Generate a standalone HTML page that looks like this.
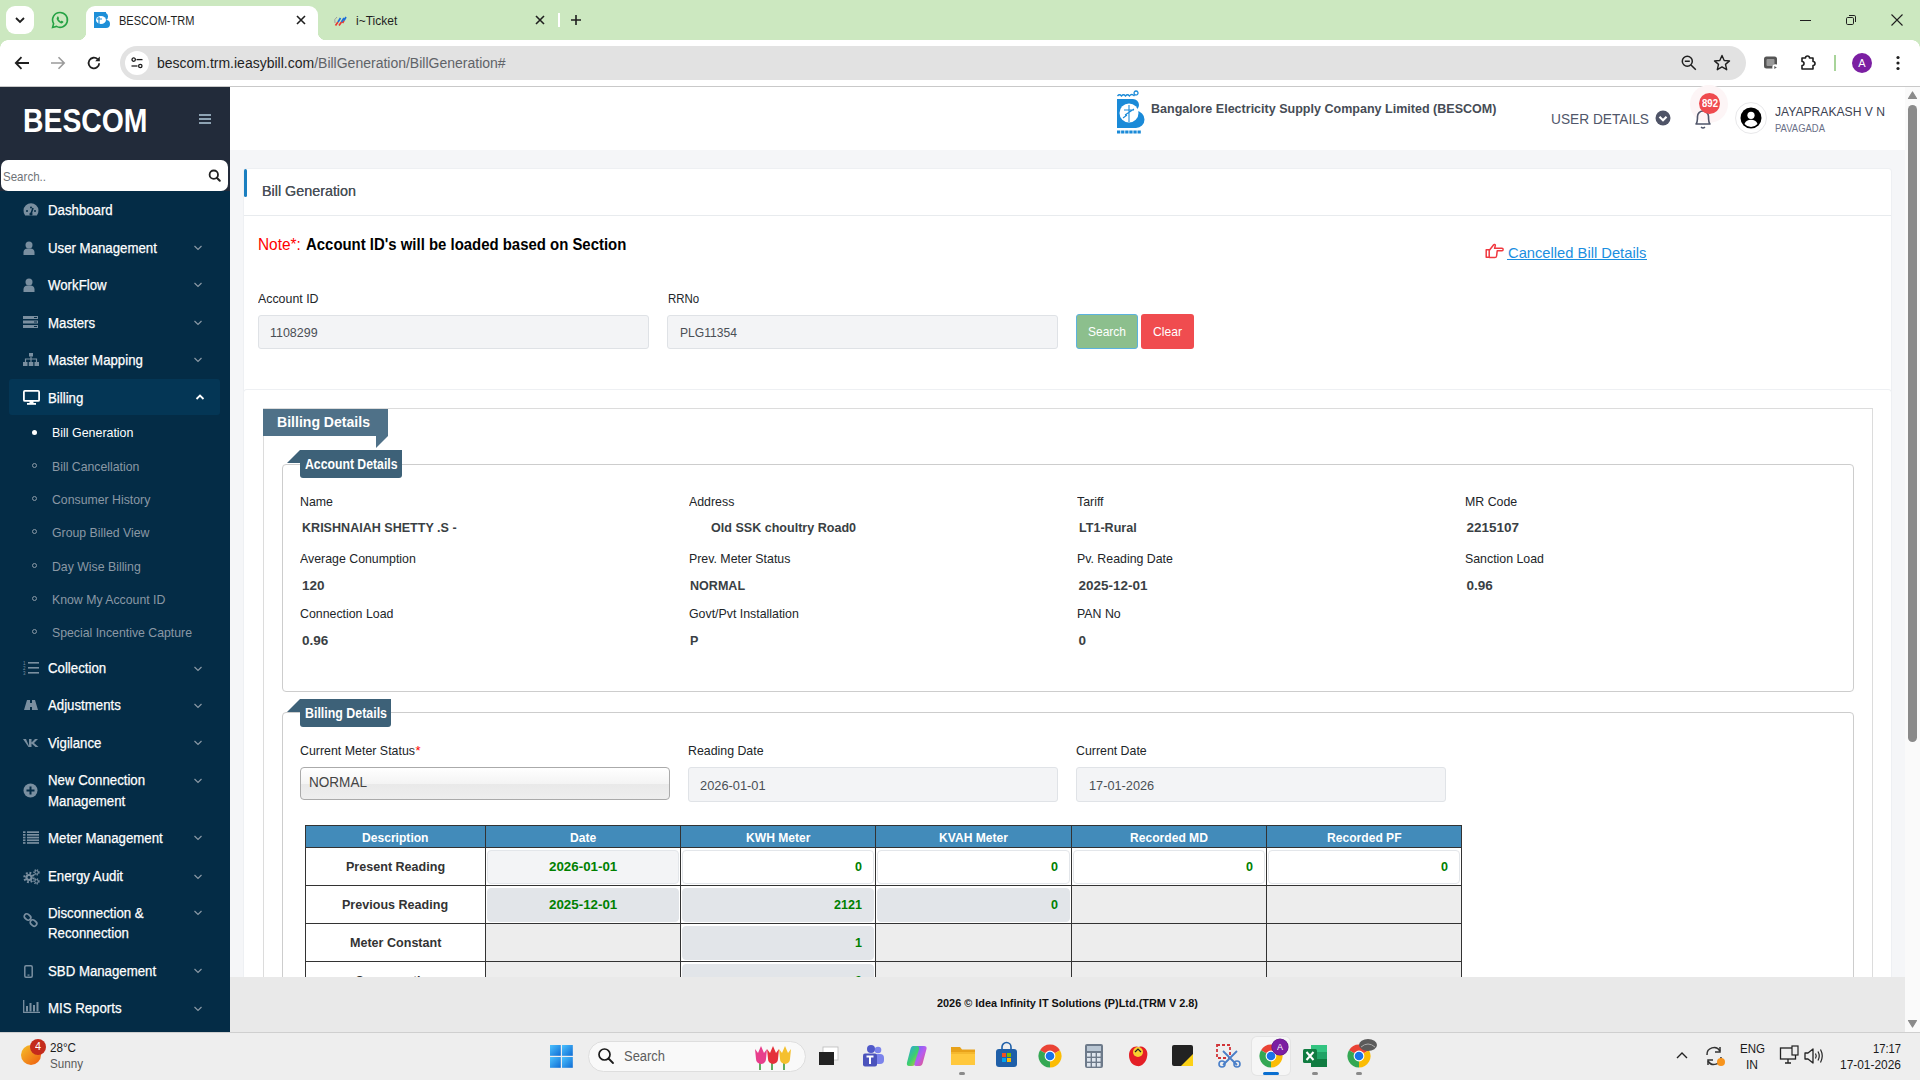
<!DOCTYPE html>
<html><head><meta charset="utf-8"><title>BESCOM-TRM</title>
<style>
*{box-sizing:border-box;margin:0;padding:0}
html,body{width:1920px;height:1080px;overflow:hidden;font-family:"Liberation Sans",sans-serif;background:#fff;position:relative}
.abs{position:absolute}
svg.abs{overflow:visible}
.t{position:absolute;white-space:nowrap;line-height:1;transform-origin:0 0}
</style></head><body>
<div class="abs" style="left:0px;top:0px;width:1920px;height:40px;background:#cce8c0;"></div>
<div class="abs" style="left:0px;top:40px;width:1920px;height:46px;background:#fff;border-top-left-radius:0"></div>
<div class="abs" style="left:0px;top:86px;width:1920px;height:1px;background:#c9c9c9;"></div>
<!-- TAB BAR -->
<div class="abs" style="left:6px;top:6px;width:28px;height:28px;background:#fff;border-radius:9px"></div>
<svg class="abs" style="left:13px;top:13px" width="14" height="14" viewBox="0 0 14 14"><path d="M3 5 L7 9 L11 5" fill="none" stroke="#1f1f1f" stroke-width="1.8"/></svg>
<svg class="abs" style="left:51px;top:11px" width="18" height="18" viewBox="0 0 18 18"><path d="M9 1.5a7.4 7.4 0 0 0-6.4 11.1L1.6 16.4l3.9-1A7.4 7.4 0 1 0 9 1.5z" fill="none" stroke="#25a244" stroke-width="1.6"/><path d="M6.3 5.6c.3-.3.7-.3.9 0l.8 1.3c.1.3 0 .6-.2.8l-.4.4c.5 1 1.3 1.8 2.3 2.3l.4-.4c.2-.2.5-.3.8-.2l1.3.8c.3.2.3.6 0 .9l-.6.6c-.5.5-1.3.5-2 .2-1.6-.8-2.9-2.1-3.7-3.7-.3-.7-.3-1.5.2-2z" fill="#25a244"/></svg>
<!-- active tab -->
<div class="abs" style="left:86px;top:6px;width:232px;height:34px;background:#fff;border-radius:9px 9px 0 0"></div>
<div class="abs" style="left:78px;top:32px;width:8px;height:8px;background:radial-gradient(circle at 0 0,#cce8c0 8px,#fff 8.5px)"></div>
<div class="abs" style="left:318px;top:32px;width:8px;height:8px;background:radial-gradient(circle at 100% 0,#cce8c0 8px,#fff 8.5px)"></div>
<svg class="abs" style="left:94px;top:12px" width="17" height="16" viewBox="0 0 17 16"><rect x="0" y="0" width="12" height="16" fill="#1e8fd8"/><path d="M9 1h3a4 4 0 0 1 0 7a4 4 0 0 1 0 8h-3z" fill="#1e8fd8"/><ellipse cx="7" cy="8" rx="5" ry="4" fill="#fff"/><path d="M5 5v7M3 7h5" stroke="#1e8fd8" stroke-width="1.2"/></svg>
<div class="t" style="left:118.5px;top:14.6px;font-size:12px;color:#1f1f1f;transform:scaleX(0.92)">BESCOM-TRM</div>
<svg class="abs" style="left:295px;top:14px" width="12" height="12" viewBox="0 0 12 12"><path d="M2 2L10 10M10 2L2 10" stroke="#1f1f1f" stroke-width="1.6"/></svg>
<!-- second tab -->
<svg class="abs" style="left:332px;top:12px" width="16" height="16" viewBox="0 0 16 16"><path d="M3.5 13.5L6 10M7 13.5L9.5 10M10.5 11L12 8.5" stroke="#e53935" stroke-width="1.7"/><path d="M6 10L8.5 6M9.5 10L12 6M12 8.5L14 5" stroke="#1e6fd9" stroke-width="1.7"/><path d="M3 11A5 5 0 0 1 5 5" fill="none" stroke="#9e9e9e" stroke-width="1"/></svg>
<div class="t" style="left:356px;top:14.6px;font-size:12px;color:#1f1f1f">i~Ticket</div>
<svg class="abs" style="left:534px;top:14px" width="12" height="12" viewBox="0 0 12 12"><path d="M2 2L10 10M10 2L2 10" stroke="#1f1f1f" stroke-width="1.6"/></svg>
<div class="abs" style="left:558px;top:13px;width:2px;height:14px;background:#ffffff"></div>
<svg class="abs" style="left:569px;top:13px" width="14" height="14" viewBox="0 0 14 14"><path d="M7 2V12M2 7H12" stroke="#1f1f1f" stroke-width="1.6"/></svg>
<!-- window controls -->
<div class="abs" style="left:1800px;top:20px;width:11px;height:1px;background:#1f1f1f"></div>
<svg class="abs" style="left:1844px;top:13px" width="14" height="14" viewBox="0 0 14 14"><rect x="2.5" y="4.5" width="7" height="7" rx="1.2" fill="none" stroke="#1f1f1f" stroke-width="1"/><path d="M5 2.5h5.2a1.3 1.3 0 0 1 1.3 1.3V9" fill="none" stroke="#1f1f1f" stroke-width="1"/></svg>
<svg class="abs" style="left:1890px;top:13px" width="14" height="14" viewBox="0 0 14 14"><path d="M1.5 1.5L12.5 12.5M12.5 1.5L1.5 12.5" stroke="#1f1f1f" stroke-width="1.1"/></svg>
<!-- TOOLBAR -->
<div class="abs" style="left:0;top:40px;width:8px;height:8px;background:radial-gradient(circle at 100% 100%,#fff 7.5px,#cce8c0 8px)"></div>
<div class="abs" style="left:1912px;top:40px;width:8px;height:8px;background:radial-gradient(circle at 0 100%,#fff 7.5px,#cce8c0 8px)"></div>
<svg class="abs" style="left:13px;top:54px" width="18" height="18" viewBox="0 0 18 18"><path d="M16 9H3M8.5 3.2L2.8 9l5.7 5.8" fill="none" stroke="#1f1f1f" stroke-width="1.8"/></svg>
<svg class="abs" style="left:49px;top:54px" width="18" height="18" viewBox="0 0 18 18"><path d="M2 9h13M9.5 3.2L15.2 9l-5.7 5.8" fill="none" stroke="#9a9a9a" stroke-width="1.6"/></svg>
<svg class="abs" style="left:85px;top:54px" width="18" height="18" viewBox="0 0 18 18"><path d="M14.2 9.2A5.3 5.3 0 1 1 12.6 5.2" fill="none" stroke="#1f1f1f" stroke-width="1.8"/><path d="M14.8 2.6v4.6h-4.6z" fill="#1f1f1f"/></svg>
<div class="abs" style="left:120px;top:46px;width:1626px;height:34px;background:#e2e2e2;border-radius:17px"></div>
<div class="abs" style="left:125px;top:51px;width:24px;height:24px;background:#fff;border-radius:12px"></div>
<svg class="abs" style="left:129px;top:55px" width="16" height="16" viewBox="0 0 16 16"><circle cx="4.7" cy="4.6" r="1.7" fill="none" stroke="#1f1f1f" stroke-width="1.3"/><path d="M7.5 4.6h6" stroke="#1f1f1f" stroke-width="1.3"/><circle cx="11.3" cy="11" r="1.7" fill="none" stroke="#1f1f1f" stroke-width="1.3"/><path d="M2.5 11h6" stroke="#1f1f1f" stroke-width="1.3"/></svg>
<div class="t" style="left:157px;top:56px;font-size:14px;color:#1f1f1f">bescom.trm.ieasybill.com<span style="color:#5f6368">/BillGeneration/BillGeneration#</span></div>
<svg class="abs" style="left:1680px;top:54px" width="18" height="18" viewBox="0 0 18 18"><circle cx="7.3" cy="7.3" r="5" fill="none" stroke="#1f1f1f" stroke-width="1.5"/><path d="M11 11l4.8 4.8M4.8 7.3h5" stroke="#1f1f1f" stroke-width="1.5"/></svg>
<svg class="abs" style="left:1712px;top:53px" width="20" height="20" viewBox="0 0 20 20"><path d="M10 2.5l2.2 5 5.3.4-4 3.5 1.2 5.3L10 13.9l-4.7 2.8 1.2-5.3-4-3.5 5.3-.4z" fill="none" stroke="#1f1f1f" stroke-width="1.4" stroke-linejoin="round"/></svg>
<svg class="abs" style="left:1762px;top:54px" width="18" height="18" viewBox="0 0 18 18"><rect x="2" y="2.5" width="13" height="12" rx="2.5" fill="#555"/><rect x="4.5" y="5" width="8" height="7" rx="1" fill="#999"/><circle cx="13.5" cy="13.5" r="3.2" fill="#fff"/><path d="M12.3 12v3l2.5-1.5z" fill="#555"/></svg>
<svg class="abs" style="left:1799px;top:54px" width="18" height="18" viewBox="0 0 18 18"><path d="M3 4h3.5a2 2 0 0 1 4 0H14v3.5a2 2 0 0 1 0 4V15H3V11.5a2 2 0 0 0 0-4z" fill="none" stroke="#1f1f1f" stroke-width="1.6" stroke-linejoin="round"/></svg>
<div class="abs" style="left:1834px;top:55px;width:2px;height:16px;background:#a8d49a"></div>
<div class="abs" style="left:1852px;top:53px;width:20px;height:20px;background:#7b1fa2;border-radius:50%;color:#fff;font-size:11px;text-align:center;line-height:20px">A</div>
<svg class="abs" style="left:1890px;top:54px" width="16" height="18" viewBox="0 0 16 18"><circle cx="8" cy="3.5" r="1.6" fill="#1f1f1f"/><circle cx="8" cy="9" r="1.6" fill="#1f1f1f"/><circle cx="8" cy="14.5" r="1.6" fill="#1f1f1f"/></svg>


<div class="abs" style="left:0px;top:87px;width:230px;height:104px;background:#222b3a;"></div>
<div class="abs" style="left:0px;top:191px;width:230px;height:841px;background:#042c46;"></div>
<div class="abs" style="left:230px;top:87px;width:1675px;height:63px;background:#fff;"></div>
<div class="abs" style="left:230px;top:150px;width:1675px;height:827px;background:#f5f6f8;"></div>
<div class="t" style="left:23.30px;top:103.65px;font-size:33px;font-weight:bold;color:#fff;transform:scaleX(0.8595);">BESCOM</div>
<div class="abs" style="left:199px;top:114px;width:12px;height:2px;background:#8ea3b3;"></div>
<div class="abs" style="left:199px;top:118px;width:12px;height:2px;background:#8ea3b3;"></div>
<div class="abs" style="left:199px;top:122px;width:12px;height:2px;background:#8ea3b3;"></div>
<div class="abs" style="left:1px;top:160px;width:227px;height:31px;background:#fff;border-radius:7px"></div>
<div class="t" style="left:3.00px;top:169.65px;font-size:13px;font-weight:normal;color:#6f7377;transform:scaleX(0.8880);">Search..</div>
<svg class="abs" style="left:205px;top:166px" width="16" height="16" viewBox="0 0 16 16"><circle cx="8.8" cy="8.7" r="4.2" fill="none" stroke="#222" stroke-width="1.8"/><path d="M11.8 11.8l3 3" stroke="#222" stroke-width="2" stroke-linecap="round"/></svg>
<div class="abs" style="left:9px;top:379px;width:211px;height:36px;background:#043655;border-radius:3px"></div>
<div class="t" style="left:48.00px;top:203.00px;font-size:14px;font-weight:normal;color:#fff;transform:scaleX(0.9450);-webkit-text-stroke:0.25px #fff">Dashboard</div>
<div class="t" style="left:48.00px;top:240.90px;font-size:14px;font-weight:normal;color:#fff;transform:scaleX(0.9450);-webkit-text-stroke:0.25px #fff">User Management</div>
<svg class="abs" style="left:193px;top:244px" width="10" height="8" viewBox="0 0 10 8"><path d="M1.5 2 L5 5.5 L8.5 2" fill="none" stroke="#8a98a5" stroke-width="1.2"/></svg>
<div class="t" style="left:48.00px;top:277.80px;font-size:14px;font-weight:normal;color:#fff;transform:scaleX(0.9450);-webkit-text-stroke:0.25px #fff">WorkFlow</div>
<svg class="abs" style="left:193px;top:281px" width="10" height="8" viewBox="0 0 10 8"><path d="M1.5 2 L5 5.5 L8.5 2" fill="none" stroke="#8a98a5" stroke-width="1.2"/></svg>
<div class="t" style="left:48.00px;top:315.90px;font-size:14px;font-weight:normal;color:#fff;transform:scaleX(0.9450);-webkit-text-stroke:0.25px #fff">Masters</div>
<svg class="abs" style="left:193px;top:319px" width="10" height="8" viewBox="0 0 10 8"><path d="M1.5 2 L5 5.5 L8.5 2" fill="none" stroke="#8a98a5" stroke-width="1.2"/></svg>
<div class="t" style="left:48.00px;top:352.70px;font-size:14px;font-weight:normal;color:#fff;transform:scaleX(0.9450);-webkit-text-stroke:0.25px #fff">Master Mapping</div>
<svg class="abs" style="left:193px;top:356px" width="10" height="8" viewBox="0 0 10 8"><path d="M1.5 2 L5 5.5 L8.5 2" fill="none" stroke="#8a98a5" stroke-width="1.2"/></svg>
<div class="t" style="left:48.00px;top:390.70px;font-size:14px;font-weight:normal;color:#fff;transform:scaleX(0.9450);-webkit-text-stroke:0.25px #fff">Billing</div>
<div class="t" style="left:48.00px;top:661.10px;font-size:14px;font-weight:normal;color:#fff;transform:scaleX(0.9450);-webkit-text-stroke:0.25px #fff">Collection</div>
<svg class="abs" style="left:193px;top:665px" width="10" height="8" viewBox="0 0 10 8"><path d="M1.5 2 L5 5.5 L8.5 2" fill="none" stroke="#8a98a5" stroke-width="1.2"/></svg>
<div class="t" style="left:48.00px;top:698.30px;font-size:14px;font-weight:normal;color:#fff;transform:scaleX(0.9450);-webkit-text-stroke:0.25px #fff">Adjustments</div>
<svg class="abs" style="left:193px;top:702px" width="10" height="8" viewBox="0 0 10 8"><path d="M1.5 2 L5 5.5 L8.5 2" fill="none" stroke="#8a98a5" stroke-width="1.2"/></svg>
<div class="t" style="left:48.00px;top:735.90px;font-size:14px;font-weight:normal;color:#fff;transform:scaleX(0.9450);-webkit-text-stroke:0.25px #fff">Vigilance</div>
<svg class="abs" style="left:193px;top:739px" width="10" height="8" viewBox="0 0 10 8"><path d="M1.5 2 L5 5.5 L8.5 2" fill="none" stroke="#8a98a5" stroke-width="1.2"/></svg>
<div class="t" style="left:48.00px;top:773.10px;font-size:14px;font-weight:normal;color:#fff;transform:scaleX(0.9450);-webkit-text-stroke:0.25px #fff">New Connection</div>
<svg class="abs" style="left:193px;top:777px" width="10" height="8" viewBox="0 0 10 8"><path d="M1.5 2 L5 5.5 L8.5 2" fill="none" stroke="#8a98a5" stroke-width="1.2"/></svg>
<div class="t" style="left:48.00px;top:794.10px;font-size:14px;font-weight:normal;color:#fff;transform:scaleX(0.9450);-webkit-text-stroke:0.25px #fff">Management</div>
<div class="t" style="left:48.00px;top:830.80px;font-size:14px;font-weight:normal;color:#fff;transform:scaleX(0.9450);-webkit-text-stroke:0.25px #fff">Meter Management</div>
<svg class="abs" style="left:193px;top:834px" width="10" height="8" viewBox="0 0 10 8"><path d="M1.5 2 L5 5.5 L8.5 2" fill="none" stroke="#8a98a5" stroke-width="1.2"/></svg>
<div class="t" style="left:48.00px;top:869.10px;font-size:14px;font-weight:normal;color:#fff;transform:scaleX(0.9450);-webkit-text-stroke:0.25px #fff">Energy Audit</div>
<svg class="abs" style="left:193px;top:873px" width="10" height="8" viewBox="0 0 10 8"><path d="M1.5 2 L5 5.5 L8.5 2" fill="none" stroke="#8a98a5" stroke-width="1.2"/></svg>
<div class="t" style="left:48.00px;top:905.90px;font-size:14px;font-weight:normal;color:#fff;transform:scaleX(0.9450);-webkit-text-stroke:0.25px #fff">Disconnection &amp;</div>
<svg class="abs" style="left:193px;top:909px" width="10" height="8" viewBox="0 0 10 8"><path d="M1.5 2 L5 5.5 L8.5 2" fill="none" stroke="#8a98a5" stroke-width="1.2"/></svg>
<div class="t" style="left:48.00px;top:925.80px;font-size:14px;font-weight:normal;color:#fff;transform:scaleX(0.9450);-webkit-text-stroke:0.25px #fff">Reconnection</div>
<div class="t" style="left:48.00px;top:963.70px;font-size:14px;font-weight:normal;color:#fff;transform:scaleX(0.9450);-webkit-text-stroke:0.25px #fff">SBD Management</div>
<svg class="abs" style="left:193px;top:967px" width="10" height="8" viewBox="0 0 10 8"><path d="M1.5 2 L5 5.5 L8.5 2" fill="none" stroke="#8a98a5" stroke-width="1.2"/></svg>
<div class="t" style="left:48.00px;top:1001.10px;font-size:14px;font-weight:normal;color:#fff;transform:scaleX(0.9450);-webkit-text-stroke:0.25px #fff">MIS Reports</div>
<svg class="abs" style="left:193px;top:1005px" width="10" height="8" viewBox="0 0 10 8"><path d="M1.5 2 L5 5.5 L8.5 2" fill="none" stroke="#8a98a5" stroke-width="1.2"/></svg>
<svg class="abs" style="left:195px;top:393px" width="10" height="8" viewBox="0 0 10 8"><path d="M1.5 6 L5 2.5 L8.5 6" fill="none" stroke="#fff" stroke-width="1.8"/></svg>
<svg class="abs" style="left:23px;top:203px" width="16" height="13" viewBox="0 0 16 13"><path d="M2.2 12.5 A7.5 7.5 0 1 1 13.8 12.5 Z" fill="#7a8fa0"/><path d="M8 11 L10 5" stroke="#042c46" stroke-width="1.6"/><circle cx="8" cy="11" r="1.6" fill="#042c46"/><circle cx="4" cy="8" r="1" fill="#042c46"/><circle cx="12" cy="8" r="1" fill="#042c46"/><circle cx="8" cy="4.5" r="1" fill="#042c46"/></svg>
<svg class="abs" style="left:23px;top:241px" width="12" height="14" viewBox="0 0 12 14"><circle cx="6" cy="4" r="3.5" fill="#7a8fa0"/><path d="M0.5 14 V11 A4 4 0 0 1 4.5 7.5 H7.5 A4 4 0 0 1 11.5 11 V14 Z" fill="#7a8fa0"/></svg>
<svg class="abs" style="left:23px;top:278px" width="12" height="14" viewBox="0 0 12 14"><circle cx="6" cy="4" r="3.5" fill="#7a8fa0"/><path d="M0.5 14 V11 A4 4 0 0 1 4.5 7.5 H7.5 A4 4 0 0 1 11.5 11 V14 Z" fill="#7a8fa0"/></svg>
<svg class="abs" style="left:23px;top:316px" width="15" height="12" viewBox="0 0 15 12"><rect x="0" y="0" width="15" height="3" fill="#7a8fa0"/><rect x="0" y="4.5" width="15" height="3" fill="#7a8fa0"/><rect x="0" y="9" width="15" height="3" fill="#7a8fa0"/><rect x="11" y="1" width="3" height="1" fill="#042c46"/><rect x="11" y="5.5" width="3" height="1" fill="#042c46"/><rect x="11" y="10" width="3" height="1" fill="#042c46"/></svg>
<svg class="abs" style="left:23px;top:353px" width="16" height="13" viewBox="0 0 16 13"><rect x="6" y="0" width="4" height="3.5" fill="#7a8fa0"/><path d="M8 3.5V6M2.5 9V6H13.5V9M8 6V9" fill="none" stroke="#7a8fa0" stroke-width="1.2"/><rect x="0" y="9" width="4.5" height="4" fill="#7a8fa0"/><rect x="5.8" y="9" width="4.5" height="4" fill="#7a8fa0"/><rect x="11.5" y="9" width="4.5" height="4" fill="#7a8fa0"/></svg>
<svg class="abs" style="left:23px;top:390px" width="17" height="15" viewBox="0 0 17 15"><rect x="0.9" y="0.9" width="15.2" height="10" rx="1" fill="none" stroke="#fff" stroke-width="1.8"/><rect x="6.5" y="11" width="4" height="2" fill="#fff"/><rect x="4" y="13" width="9" height="1.8" fill="#fff"/></svg>
<svg class="abs" style="left:23px;top:661px" width="16" height="14" viewBox="0 0 16 14"><rect x="5" y="1" width="11" height="1.6" fill="#7a8fa0"/><rect x="5" y="6" width="11" height="1.6" fill="#7a8fa0"/><rect x="5" y="11" width="11" height="1.6" fill="#7a8fa0"/><text x="0" y="4" font-size="4.5" fill="#7a8fa0" font-family="Liberation Sans">1</text><text x="0" y="9" font-size="4.5" fill="#7a8fa0" font-family="Liberation Sans">2</text><text x="0" y="14" font-size="4.5" fill="#7a8fa0" font-family="Liberation Sans">3</text></svg>
<svg class="abs" style="left:23px;top:699px" width="16" height="12" viewBox="0 0 16 12"><path d="M1 11 L4 1 H7 V11 Z M9 11 V1 H12 L15 11 Z" fill="#7a8fa0"/><rect x="6" y="4" width="4" height="4" fill="#7a8fa0"/></svg>
<svg class="abs" style="left:23px;top:738px" width="16" height="10" viewBox="0 0 16 10"><path d="M0 1 H3 L6 8 V1 H8.5 V4.5 L12 1 H15 L11 5 L15.5 9 H12.5 L8.5 5.5 V9 H5.5 Z" fill="#7a8fa0"/></svg>
<svg class="abs" style="left:23px;top:783px" width="15" height="15" viewBox="0 0 15 15"><circle cx="7.5" cy="7.5" r="7" fill="#7a8fa0"/><path d="M7.5 3.5V11.5M3.5 7.5H11.5" stroke="#042c46" stroke-width="2"/></svg>
<svg class="abs" style="left:23px;top:831px" width="16" height="14" viewBox="0 0 16 14"><rect x="0" y="0.3" width="2.5" height="1.7" fill="#7a8fa0"/><rect x="4" y="0.3" width="12" height="1.7" fill="#7a8fa0"/><rect x="0" y="3.0" width="2.5" height="1.7" fill="#7a8fa0"/><rect x="4" y="3.0" width="12" height="1.7" fill="#7a8fa0"/><rect x="0" y="5.7" width="2.5" height="1.7" fill="#7a8fa0"/><rect x="4" y="5.7" width="12" height="1.7" fill="#7a8fa0"/><rect x="0" y="8.4" width="2.5" height="1.7" fill="#7a8fa0"/><rect x="4" y="8.4" width="12" height="1.7" fill="#7a8fa0"/><rect x="0" y="11.1" width="2.5" height="1.7" fill="#7a8fa0"/><rect x="4" y="11.1" width="12" height="1.7" fill="#7a8fa0"/></svg>
<svg class="abs" style="left:23px;top:869px" width="17" height="15" viewBox="0 0 17 15"><circle cx="6" cy="8.5" r="4.6" fill="none" stroke="#7a8fa0" stroke-width="2.2" stroke-dasharray="1.8 1.8"/><circle cx="6" cy="8.5" r="3.6" fill="#7a8fa0"/><circle cx="6" cy="8.5" r="1.4" fill="#042c46"/><circle cx="13.5" cy="3.3" r="2.4" fill="none" stroke="#7a8fa0" stroke-width="1.5" stroke-dasharray="1.2 0.9"/><circle cx="13.5" cy="3.3" r="1.6" fill="none" stroke="#7a8fa0" stroke-width="1"/><circle cx="13.5" cy="12.3" r="2.4" fill="none" stroke="#7a8fa0" stroke-width="1.5" stroke-dasharray="1.2 0.9"/><circle cx="13.5" cy="12.3" r="1.6" fill="none" stroke="#7a8fa0" stroke-width="1"/></svg>
<svg class="abs" style="left:23px;top:913px" width="15" height="14" viewBox="0 0 15 14"><rect x="1" y="1.5" width="7" height="5" rx="2.5" transform="rotate(40 4.5 4)" fill="none" stroke="#7a8fa0" stroke-width="1.7"/><rect x="7" y="7.5" width="7" height="5" rx="2.5" transform="rotate(40 10.5 10)" fill="none" stroke="#7a8fa0" stroke-width="1.7"/></svg>
<svg class="abs" style="left:24px;top:965px" width="9" height="13" viewBox="0 0 9 13"><rect x="0.8" y="0.8" width="7.4" height="11.4" rx="1.2" fill="none" stroke="#7a8fa0" stroke-width="1.5"/><rect x="3.5" y="9.5" width="2" height="1.2" fill="#7a8fa0"/></svg>
<svg class="abs" style="left:23px;top:1000px" width="17" height="13" viewBox="0 0 17 13"><path d="M0.7 0V12.3H17" fill="none" stroke="#7a8fa0" stroke-width="1.3"/><rect x="3" y="6" width="2" height="5.5" fill="#7a8fa0"/><rect x="6.5" y="3" width="2" height="8.5" fill="#7a8fa0"/><rect x="10" y="5" width="2" height="6.5" fill="#7a8fa0"/><rect x="13.5" y="2" width="2" height="9.5" fill="#7a8fa0"/></svg>
<div class="t" style="left:52.00px;top:426.45px;font-size:13px;font-weight:normal;color:#fff;transform:scaleX(0.9550);">Bill Generation</div>
<div class="abs" style="left:32px;top:430.0px;width:5px;height:5px;background:#fff;border-radius:50%"></div>
<div class="t" style="left:52.00px;top:459.55px;font-size:13px;font-weight:normal;color:#8a98a5;transform:scaleX(0.9450);">Bill Cancellation</div>
<div class="abs" style="left:32px;top:463.1px;width:5px;height:5px;background:none;border:1px solid #8a98a5;border-radius:50%"></div>
<div class="t" style="left:52.00px;top:492.85px;font-size:13px;font-weight:normal;color:#8a98a5;transform:scaleX(0.9450);">Consumer History</div>
<div class="abs" style="left:32px;top:496.4px;width:5px;height:5px;background:none;border:1px solid #8a98a5;border-radius:50%"></div>
<div class="t" style="left:52.00px;top:525.75px;font-size:13px;font-weight:normal;color:#8a98a5;transform:scaleX(0.9450);">Group Billed View</div>
<div class="abs" style="left:32px;top:529.3px;width:5px;height:5px;background:none;border:1px solid #8a98a5;border-radius:50%"></div>
<div class="t" style="left:52.00px;top:559.55px;font-size:13px;font-weight:normal;color:#8a98a5;transform:scaleX(0.9450);">Day Wise Billing</div>
<div class="abs" style="left:32px;top:563.1px;width:5px;height:5px;background:none;border:1px solid #8a98a5;border-radius:50%"></div>
<div class="t" style="left:52.00px;top:592.85px;font-size:13px;font-weight:normal;color:#8a98a5;transform:scaleX(0.9450);">Know My Account ID</div>
<div class="abs" style="left:32px;top:596.4px;width:5px;height:5px;background:none;border:1px solid #8a98a5;border-radius:50%"></div>
<div class="t" style="left:52.00px;top:625.75px;font-size:13px;font-weight:normal;color:#8a98a5;transform:scaleX(0.9450);">Special Incentive Capture</div>
<div class="abs" style="left:32px;top:629.3px;width:5px;height:5px;background:none;border:1px solid #8a98a5;border-radius:50%"></div>
<svg class="abs" style="left:1116px;top:92px" width="30" height="42" viewBox="0 0 30 42"><path d="M1.5 4 q2 -2.5 4 0 q2 -2.5 4 0 q2 -2.5 4 0 q2 -3 5 0 M20 3 a2 2 0 1 1 0.1 0" fill="none" stroke="#1a8ad8" stroke-width="1.3"/>
<path d="M1 7 H17 A6 6 0 0 1 17 19 H20 A8.5 8.5 0 0 1 20 36 H1 Z" fill="#1a8ad8"/>
<circle cx="13" cy="21" r="9.5" fill="#fff"/>
<path d="M13 13v17M8 18h10M9 23l9-6M7 26l4-3" stroke="#1a8ad8" stroke-width="1.1" fill="none"/>
<path d="M1 40 h24" stroke="#1a8ad8" stroke-width="3" stroke-dasharray="3.3 0.8"/></svg>
<div class="t" style="left:1150.60px;top:102.45px;font-size:13px;font-weight:bold;color:#464c55;transform:scaleX(0.9643);">Bangalore Electricity Supply Company Limited (BESCOM)</div>
<div class="t" style="left:1551.25px;top:111.15px;font-size:15px;font-weight:normal;color:#50566a;transform:scaleX(0.9138);">USER DETAILS</div>
<svg class="abs" style="left:1655px;top:110px" width="16" height="16" viewBox="0 0 16 16"><circle cx="8" cy="8" r="7.5" fill="#4f5467"/><path d="M4.5 6.8 L8 10.2 L11.5 6.8" fill="none" stroke="#fff" stroke-width="2.2"/></svg>
<div class="abs" style="left:1690px;top:85px;width:38px;height:38px;background:#fdf5f6;border-radius:50%"></div>
<svg class="abs" style="left:1693px;top:108px" width="20" height="22" viewBox="0 0 20 22"><path d="M3 16 C4.5 14.5 4.5 12 4.5 8.5 A5.5 5.5 0 0 1 15.5 8.5 C15.5 12 15.5 14.5 17 16 Z" fill="none" stroke="#50566a" stroke-width="1.6" stroke-linejoin="round"/><path d="M8 19 Q10 21 12 19" fill="none" stroke="#50566a" stroke-width="1.4"/></svg>
<div class="abs" style="left:1699px;top:93px;width:21px;height:21px;background:#ef4b4f;border-radius:50%"></div>
<div class="t" style="left:1701.50px;top:98.80px;font-size:10px;font-weight:bold;color:#fff;transform:scaleX(0.9588);">892</div>
<div class="abs" style="left:1735px;top:102px;width:32px;height:32px;background:#fff;border:1px solid #e8e8ea;border-radius:50%"></div>
<svg class="abs" style="left:1740px;top:107px" width="22" height="22" viewBox="0 0 22 22"><circle cx="11" cy="11" r="10.5" fill="#000"/><circle cx="11" cy="8.3" r="3.6" fill="#fff"/><path d="M4.5 17 C5.5 13.8 8 12.8 11 12.8 C14 12.8 16.5 13.8 17.5 17 A8.6 8.6 0 0 1 4.5 17 Z" fill="#fff"/></svg>
<div class="t" style="left:1774.60px;top:105.62px;font-size:12.5px;font-weight:normal;color:#3c4252;transform:scaleX(0.9694);">JAYAPRAKASH V N</div>
<div class="t" style="left:1774.60px;top:123.38px;font-size:10.5px;font-weight:normal;color:#6a7088;transform:scaleX(0.9019);">PAVAGADA</div>
<div class="abs" style="left:244px;top:169px;width:1647px;height:221px;background:#fff;border-radius:3px 3px 0 0;box-shadow:0 0 0 1px #eef0f3"></div>
<div class="abs" style="left:244px;top:215px;width:1647px;height:1px;background:#e8ebee;"></div>
<div class="abs" style="left:244px;top:169px;width:3px;height:28px;background:#1b7fc0;border-radius:2px"></div>
<div class="t" style="left:262.30px;top:183.93px;font-size:14.5px;font-weight:normal;color:#4a5058;transform:scaleX(0.9883);text-shadow:0 0 0.3px #4a5058">Bill Generation</div>
<div class="t" style="left:257.90px;top:237.40px;font-size:16px;font-weight:normal;color:#ff0000;transform:scaleX(0.9625);">Note*:</div>
<div class="t" style="left:305.50px;top:237.40px;font-size:16px;font-weight:bold;color:#000;transform:scaleX(0.9327);">Account ID's will be loaded based on Section</div>
<svg class="abs" style="left:1485px;top:243px" width="20" height="16" viewBox="0 0 20 16"><path d="M1.2 6.8 H4.2 V14.2 H1.2 Z M4.2 7.5 L8.5 2 C9 1 10.5 1.3 10.3 2.6 L9.6 5.3 H17 C18.5 5.3 18.5 7.8 17 7.8 H12.2 L11.6 13 C11.4 14.4 10.6 14.6 9.8 14.6 H4.2" fill="none" stroke="#f0383f" stroke-width="1.5" stroke-linejoin="round"/></svg>
<div class="t" style="left:1507.80px;top:245.05px;font-size:15px;font-weight:normal;color:#1a8ee0;transform:scaleX(0.9815);">Cancelled Bill Details</div>
<div class="abs" style="left:1507px;top:259px;width:139.5px;height:1px;background:#1a8ee0;"></div>
<div class="t" style="left:258.00px;top:292.12px;font-size:13.5px;font-weight:normal;color:#212529;transform:scaleX(0.9162);">Account ID</div>
<div class="t" style="left:667.50px;top:292.12px;font-size:13.5px;font-weight:normal;color:#212529;transform:scaleX(0.8486);">RRNo</div>
<div class="abs" style="left:258px;top:315px;width:391px;height:34px;background:#f3f4f6;border:1px solid #dfe2e6;border-radius:3px"></div>
<div class="abs" style="left:667px;top:315px;width:391px;height:34px;background:#f3f4f6;border:1px solid #dfe2e6;border-radius:3px"></div>
<div class="t" style="left:270.40px;top:325.95px;font-size:13px;font-weight:normal;color:#4a4f55;transform:scaleX(0.9586);">1108299</div>
<div class="t" style="left:679.50px;top:325.95px;font-size:13px;font-weight:normal;color:#4a4f55;transform:scaleX(0.9313);">PLG11354</div>
<div class="abs" style="left:1076px;top:314px;width:62px;height:35px;background:#8cbf8d;border:1px solid #5cb2de;border-radius:3px"></div>
<div class="t" style="left:1088.00px;top:324.95px;font-size:13px;font-weight:normal;color:#fff;transform:scaleX(0.9223);">Search</div>
<div class="abs" style="left:1141px;top:314px;width:53px;height:35px;background:#f04c4f;border-radius:3px"></div>
<div class="t" style="left:1153.00px;top:324.95px;font-size:13px;font-weight:normal;color:#fff;transform:scaleX(0.9331);">Clear</div>
<div class="abs" style="left:244px;top:390px;width:1647px;height:700px;background:#fff;border-radius:3px;box-shadow:0 0 0 1px #eef0f3"></div>
<div class="abs" style="left:263px;top:408px;width:1610px;height:700px;background:none;border:1px solid #dcdcdc"></div>
<div class="abs" style="left:263px;top:409px;width:125px;height:27px;background:#4f7188;"></div>
<svg class="abs" style="left:376px;top:436px" width="12" height="12" viewBox="0 0 12 12"><path d="M0 0 H12 L0 12 Z" fill="#4f7188"/></svg>
<div class="t" style="left:276.70px;top:413.82px;font-size:15.5px;font-weight:bold;color:#fff;transform:scaleX(0.9073);">Billing Details</div>
<div class="abs" style="left:281.5px;top:463.5px;width:1572px;height:228px;background:none;border:1px solid #cdcdcd;border-radius:4px"></div>
<div class="abs" style="left:300px;top:450px;width:102px;height:27.5px;background:#3d6178;border-radius:0 0 3px 3px"></div>
<svg class="abs" style="left:287px;top:450px" width="13" height="13" viewBox="0 0 13 13"><path d="M13 0 V13 H0 Z" fill="#3d6178"/></svg>
<div class="t" style="left:305.00px;top:456.85px;font-size:14px;font-weight:bold;color:#fff;transform:scaleX(0.8742);">Account Details</div>
<div class="t" style="left:300.20px;top:494.95px;font-size:13px;font-weight:normal;color:#212529;transform:scaleX(0.9500);">Name</div>
<div class="t" style="left:302.00px;top:521.32px;font-size:13.5px;font-weight:bold;color:#3a3f44;transform:scaleX(0.9300);">KRISHNAIAH SHETTY .S -</div>
<div class="t" style="left:688.60px;top:494.95px;font-size:13px;font-weight:normal;color:#212529;transform:scaleX(0.9500);">Address</div>
<div class="t" style="left:711.00px;top:521.32px;font-size:13.5px;font-weight:bold;color:#3a3f44;transform:scaleX(0.9300);">Old SSK choultry Road0</div>
<div class="t" style="left:1076.70px;top:494.95px;font-size:13px;font-weight:normal;color:#212529;transform:scaleX(0.9500);">Tariff</div>
<div class="t" style="left:1078.50px;top:521.32px;font-size:13.5px;font-weight:bold;color:#3a3f44;transform:scaleX(0.9300);">LT1-Rural</div>
<div class="t" style="left:1464.60px;top:494.95px;font-size:13px;font-weight:normal;color:#212529;transform:scaleX(0.9500);">MR Code</div>
<div class="t" style="left:1466.40px;top:521.32px;font-size:13.5px;font-weight:bold;color:#3a3f44;">2215107</div>
<div class="t" style="left:300.20px;top:551.65px;font-size:13px;font-weight:normal;color:#212529;transform:scaleX(0.9500);">Average Conumption</div>
<div class="t" style="left:302.00px;top:578.52px;font-size:13.5px;font-weight:bold;color:#3a3f44;">120</div>
<div class="t" style="left:688.60px;top:551.65px;font-size:13px;font-weight:normal;color:#212529;transform:scaleX(0.9500);">Prev. Meter Status</div>
<div class="t" style="left:690.40px;top:578.52px;font-size:13.5px;font-weight:bold;color:#3a3f44;transform:scaleX(0.9300);">NORMAL</div>
<div class="t" style="left:1076.70px;top:551.65px;font-size:13px;font-weight:normal;color:#212529;transform:scaleX(0.9500);">Pv. Reading Date</div>
<div class="t" style="left:1078.50px;top:578.52px;font-size:13.5px;font-weight:bold;color:#3a3f44;">2025-12-01</div>
<div class="t" style="left:1464.60px;top:551.65px;font-size:13px;font-weight:normal;color:#212529;transform:scaleX(0.9500);">Sanction Load</div>
<div class="t" style="left:1466.40px;top:578.52px;font-size:13.5px;font-weight:bold;color:#3a3f44;">0.96</div>
<div class="t" style="left:300.20px;top:606.65px;font-size:13px;font-weight:normal;color:#212529;transform:scaleX(0.9500);">Connection Load</div>
<div class="t" style="left:302.00px;top:633.52px;font-size:13.5px;font-weight:bold;color:#3a3f44;">0.96</div>
<div class="t" style="left:688.60px;top:606.65px;font-size:13px;font-weight:normal;color:#212529;transform:scaleX(0.9500);">Govt/Pvt Installation</div>
<div class="t" style="left:690.40px;top:633.52px;font-size:13.5px;font-weight:bold;color:#3a3f44;transform:scaleX(0.9300);">P</div>
<div class="t" style="left:1076.70px;top:606.65px;font-size:13px;font-weight:normal;color:#212529;transform:scaleX(0.9500);">PAN No</div>
<div class="t" style="left:1078.50px;top:633.52px;font-size:13.5px;font-weight:bold;color:#3a3f44;">0</div>
<div class="abs" style="left:281.5px;top:712.3px;width:1572px;height:400px;background:none;border:1px solid #cdcdcd;border-radius:4px"></div>
<div class="abs" style="left:300.2px;top:699.2px;width:90.5px;height:27.5px;background:#3d6178;border-radius:0 0 3px 3px"></div>
<svg class="abs" style="left:287.2px;top:699.2px" width="13" height="13" viewBox="0 0 13 13"><path d="M13 0 V13 H0 Z" fill="#3d6178"/></svg>
<div class="t" style="left:305.20px;top:706.05px;font-size:14px;font-weight:bold;color:#fff;transform:scaleX(0.8857);">Billing Details</div>
<div class="t" style="left:300.20px;top:744.35px;font-size:13px;font-weight:normal;color:#212529;transform:scaleX(0.9531);">Current Meter Status</div>
<div class="t" style="left:415.50px;top:744.35px;font-size:13px;font-weight:normal;color:#ff0000;">*</div>
<div class="t" style="left:688.40px;top:744.35px;font-size:13px;font-weight:normal;color:#212529;transform:scaleX(0.9500);">Reading Date</div>
<div class="t" style="left:1076.30px;top:744.35px;font-size:13px;font-weight:normal;color:#212529;transform:scaleX(0.9500);">Current Date</div>
<div class="abs" style="left:300px;top:767px;width:370px;height:33px;background:linear-gradient(#ffffff 0%,#f4f4f4 50%,#e9e9e9 52%,#eeeeee 100%);border:1px solid #aaaaaa;border-radius:4px"></div>
<div class="t" style="left:308.70px;top:775.00px;font-size:14px;font-weight:normal;color:#444;transform:scaleX(0.9682);">NORMAL</div>
<div class="abs" style="left:688px;top:767px;width:369.5px;height:35px;background:#f3f4f6;border:1px solid #e0e3e7;border-radius:3px"></div>
<div class="t" style="left:699.80px;top:778.75px;font-size:13px;font-weight:normal;color:#4a4f55;transform:scaleX(0.9865);">2026-01-01</div>
<div class="abs" style="left:1076px;top:767px;width:369.5px;height:35px;background:#f3f4f6;border:1px solid #e0e3e7;border-radius:3px"></div>
<div class="t" style="left:1088.60px;top:778.75px;font-size:13px;font-weight:normal;color:#4a4f55;transform:scaleX(0.9805);">17-01-2026</div>
<div class="abs" style="left:305px;top:825px;width:1157px;height:23px;background:#428bba;"></div>
<div class="abs" style="left:306px;top:848px;width:179px;height:37px;background:#fff;"></div>
<div class="t" style="left:345.96px;top:860.02px;font-size:13.5px;font-weight:bold;color:#333;transform:scaleX(0.9300);">Present Reading</div>
<div class="abs" style="left:306px;top:886px;width:179px;height:37px;background:#fff;"></div>
<div class="t" style="left:342.47px;top:898.02px;font-size:13.5px;font-weight:bold;color:#333;transform:scaleX(0.9300);">Previous Reading</div>
<div class="abs" style="left:306px;top:924px;width:179px;height:37px;background:#fff;"></div>
<div class="t" style="left:349.81px;top:936.02px;font-size:13.5px;font-weight:bold;color:#333;transform:scaleX(0.9300);">Meter Constant</div>
<div class="abs" style="left:306px;top:962px;width:179px;height:37px;background:#fff;"></div>
<div class="t" style="left:355.05px;top:974.02px;font-size:13.5px;font-weight:bold;color:#333;transform:scaleX(0.9300);">Consumption</div>
<div class="abs" style="left:487px;top:849.5px;width:192px;height:34px;background:#f3f4f6;border:1px solid #e3e6ea;border-radius:4px"></div>
<div class="t" style="left:548.85px;top:859.92px;font-size:13.5px;font-weight:bold;color:#008000;transform:scaleX(0.9890);">2026-01-01</div>
<div class="abs" style="left:487px;top:887.5px;width:192px;height:34px;background:#e2e5e9;border:1px solid #e2e5e9;border-radius:4px"></div>
<div class="t" style="left:548.85px;top:897.92px;font-size:13.5px;font-weight:bold;color:#008000;transform:scaleX(0.9890);">2025-12-01</div>
<div class="abs" style="left:486px;top:924px;width:194px;height:37px;background:#ededed;"></div>
<div class="abs" style="left:486px;top:962px;width:194px;height:37px;background:#ededed;"></div>
<div class="abs" style="left:682px;top:849.5px;width:192px;height:34px;background:#ffffff;border:1px solid #e3e6ea;border-radius:4px"></div>
<div class="t" style="left:854.51px;top:859.92px;font-size:13.5px;font-weight:bold;color:#008000;transform:scaleX(0.9300);">0</div>
<div class="abs" style="left:682px;top:887.5px;width:192px;height:34px;background:#e2e5e9;border:1px solid #e2e5e9;border-radius:4px"></div>
<div class="t" style="left:833.56px;top:897.92px;font-size:13.5px;font-weight:bold;color:#008000;transform:scaleX(0.9300);">2121</div>
<div class="abs" style="left:682px;top:925.5px;width:192px;height:34px;background:#e2e5e9;border:1px solid #e2e5e9;border-radius:4px"></div>
<div class="t" style="left:854.51px;top:935.92px;font-size:13.5px;font-weight:bold;color:#008000;transform:scaleX(0.9300);">1</div>
<div class="abs" style="left:682px;top:963.5px;width:192px;height:34px;background:#e2e5e9;border:1px solid #e2e5e9;border-radius:4px"></div>
<div class="t" style="left:854.51px;top:973.92px;font-size:13.5px;font-weight:bold;color:#008000;transform:scaleX(0.9300);">0</div>
<div class="abs" style="left:877px;top:849.5px;width:193px;height:34px;background:#ffffff;border:1px solid #e3e6ea;border-radius:4px"></div>
<div class="t" style="left:1050.51px;top:859.92px;font-size:13.5px;font-weight:bold;color:#008000;transform:scaleX(0.9300);">0</div>
<div class="abs" style="left:877px;top:887.5px;width:193px;height:34px;background:#e2e5e9;border:1px solid #e2e5e9;border-radius:4px"></div>
<div class="t" style="left:1050.51px;top:897.92px;font-size:13.5px;font-weight:bold;color:#008000;transform:scaleX(0.9300);">0</div>
<div class="abs" style="left:876px;top:924px;width:195px;height:37px;background:#ededed;"></div>
<div class="abs" style="left:876px;top:962px;width:195px;height:37px;background:#ededed;"></div>
<div class="abs" style="left:1073px;top:849.5px;width:192px;height:34px;background:#ffffff;border:1px solid #e3e6ea;border-radius:4px"></div>
<div class="t" style="left:1245.51px;top:859.92px;font-size:13.5px;font-weight:bold;color:#008000;transform:scaleX(0.9300);">0</div>
<div class="abs" style="left:1072px;top:886px;width:194px;height:37px;background:#ededed;"></div>
<div class="abs" style="left:1072px;top:924px;width:194px;height:37px;background:#ededed;"></div>
<div class="abs" style="left:1072px;top:962px;width:194px;height:37px;background:#ededed;"></div>
<div class="abs" style="left:1268px;top:849.5px;width:192px;height:34px;background:#ffffff;border:1px solid #e3e6ea;border-radius:4px"></div>
<div class="t" style="left:1440.51px;top:859.92px;font-size:13.5px;font-weight:bold;color:#008000;transform:scaleX(0.9300);">0</div>
<div class="abs" style="left:1267px;top:886px;width:194px;height:37px;background:#ededed;"></div>
<div class="abs" style="left:1267px;top:924px;width:194px;height:37px;background:#ededed;"></div>
<div class="abs" style="left:1267px;top:962px;width:194px;height:37px;background:#ededed;"></div>
<div class="t" style="left:362.25px;top:831.15px;font-size:13px;font-weight:bold;color:#fff;transform:scaleX(0.9300);">Description</div>
<div class="t" style="left:569.89px;top:831.15px;font-size:13px;font-weight:bold;color:#fff;transform:scaleX(0.9300);">Date</div>
<div class="t" style="left:745.76px;top:831.15px;font-size:13px;font-weight:bold;color:#fff;transform:scaleX(0.9300);">KWH Meter</div>
<div class="t" style="left:939.01px;top:831.15px;font-size:13px;font-weight:bold;color:#fff;transform:scaleX(0.9300);">KVAH Meter</div>
<div class="t" style="left:1130.03px;top:831.15px;font-size:13px;font-weight:bold;color:#fff;transform:scaleX(0.9300);">Recorded MD</div>
<div class="t" style="left:1326.71px;top:831.15px;font-size:13px;font-weight:bold;color:#fff;transform:scaleX(0.9300);">Recorded PF</div>
<div class="abs" style="left:305px;top:825px;width:1157px;height:1px;background:#333333;"></div>
<div class="abs" style="left:305px;top:847px;width:1157px;height:1px;background:#333333;"></div>
<div class="abs" style="left:305px;top:885px;width:1157px;height:1px;background:#333333;"></div>
<div class="abs" style="left:305px;top:923px;width:1157px;height:1px;background:#333333;"></div>
<div class="abs" style="left:305px;top:961px;width:1157px;height:1px;background:#333333;"></div>
<div class="abs" style="left:305px;top:825px;width:1px;height:200px;background:#333333;"></div>
<div class="abs" style="left:485px;top:825px;width:1px;height:200px;background:#333333;"></div>
<div class="abs" style="left:680px;top:825px;width:1px;height:200px;background:#333333;"></div>
<div class="abs" style="left:875px;top:825px;width:1px;height:200px;background:#333333;"></div>
<div class="abs" style="left:1071px;top:825px;width:1px;height:200px;background:#333333;"></div>
<div class="abs" style="left:1266px;top:825px;width:1px;height:200px;background:#333333;"></div>
<div class="abs" style="left:1461px;top:825px;width:1px;height:200px;background:#333333;"></div>
<div class="abs" style="left:230px;top:977px;width:1675px;height:55px;background:#e9e9e9;"></div>
<div class="t" style="left:937.00px;top:998.15px;font-size:11px;font-weight:bold;color:#111;transform:scaleX(0.9902);">2026 © Idea Infinity IT Solutions (P)Ltd.(TRM V 2.8)</div>
<div class="abs" style="left:1905px;top:87px;width:15px;height:945px;background:#fafafa;"></div>
<svg class="abs" style="left:1907px;top:90px" width="11" height="10" viewBox="0 0 11 10"><path d="M1.5 8.5 H9.5 L5.5 2 Z" fill="#8a8a8a" stroke="#8a8a8a" stroke-width="1.2" stroke-linejoin="round"/></svg>
<div class="abs" style="left:1908px;top:105px;width:9px;height:637px;background:#8a8a8a;border-radius:4.5px"></div>
<svg class="abs" style="left:1907px;top:1019px" width="11" height="10" viewBox="0 0 11 10"><path d="M1.5 1.5 H9.5 L5.5 8 Z" fill="#8a8a8a" stroke="#8a8a8a" stroke-width="1.2" stroke-linejoin="round"/></svg>
<div class="abs" style="left:0px;top:1032px;width:1920px;height:48px;background:#eeeeee;"></div>
<div class="abs" style="left:0px;top:1032px;width:1920px;height:1px;background:#cfcfcf;"></div>
<svg class="abs" style="left:20px;top:1044px" width="22" height="22" viewBox="0 0 22 22"><defs><linearGradient id="sun" x1="0" y1="0" x2="1" y2="1"><stop offset="0" stop-color="#f5c12a"/><stop offset="1" stop-color="#ee5a0e"/></linearGradient></defs><circle cx="11" cy="11" r="10" fill="url(#sun)"/></svg>
<div class="abs" style="left:29.7px;top:1038.5px;width:16px;height:16px;background:#c42b1c;border-radius:50%"></div>
<div class="t" style="left:34.70px;top:1041.45px;font-size:11px;font-weight:normal;color:#fff;transform:scaleX(0.9796);">4</div>
<div class="t" style="left:50.00px;top:1041.80px;font-size:12px;font-weight:normal;color:#1a1a1a;transform:scaleX(0.9697);">28°C</div>
<div class="t" style="left:50.00px;top:1058.30px;font-size:12px;font-weight:normal;color:#5a5a5a;transform:scaleX(0.9697);">Sunny</div>
<svg class="abs" style="left:550px;top:1045px" width="23" height="23" viewBox="0 0 23 23"><defs><linearGradient id="wg" x1="0" y1="0" x2="1" y2="1"><stop offset="0" stop-color="#4cc2ff"/><stop offset="1" stop-color="#0f6cd4"/></linearGradient></defs><rect x="0" y="0" width="10.8" height="10.8" fill="url(#wg)"/><rect x="12" y="0" width="10.8" height="10.8" fill="url(#wg)"/><rect x="0" y="12" width="10.8" height="10.8" fill="url(#wg)"/><rect x="12" y="12" width="10.8" height="10.8" fill="url(#wg)"/></svg>
<div class="abs" style="left:588px;top:1041px;width:218px;height:31px;background:#f9f9f9;border:1px solid #dedede;border-radius:16px"></div>
<svg class="abs" style="left:597px;top:1047px" width="18" height="18" viewBox="0 0 18 18"><circle cx="7.5" cy="7.5" r="5.5" fill="none" stroke="#1a1a1a" stroke-width="1.7"/><path d="M11.5 11.5L16 16" stroke="#1a1a1a" stroke-width="1.8" stroke-linecap="round"/></svg>
<div class="t" style="left:624.00px;top:1049.10px;font-size:14px;font-weight:normal;color:#5d5d5d;transform:scaleX(0.9243);">Search</div>
<svg class="abs" style="left:754px;top:1043px" width="48" height="28" viewBox="0 0 48 28"><path d="M6 20 V27 M18 20 V27 M30 20 V27" stroke="#3a9a3a" stroke-width="1.6"/><path d="M1 6 L4 10 L7 3 L10 10 L13 6 L12 16 A5 5 0 0 1 2 16 Z" fill="#e83e8c"/><path d="M13 6 L16 10 L19 3 L22 10 L25 6 L24 16 A5 5 0 0 1 14 16 Z" fill="#e5303a"/><path d="M25 6 L28 10 L31 3 L34 10 L37 6 L36 16 A5 5 0 0 1 26 16 Z" fill="#f5c02e"/></svg>
<svg class="abs" style="left:818px;top:1046px" width="22" height="20" viewBox="0 0 22 20"><rect x="5" y="1" width="15" height="13" fill="#fff" stroke="#bbb" stroke-width="0.8"/><rect x="1" y="6" width="15" height="13" fill="#222"/></svg>
<svg class="abs" style="left:862px;top:1044px" width="24" height="24" viewBox="0 0 24 24"><circle cx="16" cy="6" r="3.3" fill="#7b83eb"/><rect x="12" y="10" width="10" height="10" rx="4" fill="#7b83eb"/><circle cx="9" cy="5" r="4" fill="#5059c9"/><rect x="1" y="9.5" width="14" height="13" rx="2" fill="#4b53bc"/><path d="M4.5 12.5 H11.5 M8 12.5 V20" stroke="#fff" stroke-width="2"/></svg>
<svg class="abs" style="left:906px;top:1044px" width="24" height="24" viewBox="0 0 24 24"><defs><linearGradient id="cp1" x1="0" y1="0" x2="1" y2="1"><stop offset="0" stop-color="#2a9df4"/><stop offset="0.5" stop-color="#3ccf6e"/><stop offset="1" stop-color="#f6c431"/></linearGradient><linearGradient id="cp2" x1="0" y1="0" x2="1" y2="1"><stop offset="0" stop-color="#5b6cf5"/><stop offset="0.5" stop-color="#b65df0"/><stop offset="1" stop-color="#f0566a"/></linearGradient></defs><path d="M7 2 H13 C15 2 15.5 3.5 14.8 5.5 L10 19 C9.3 21 8 22 6 22 H3 C1.2 22 0.5 20.5 1 18.5 L4.5 5 C5 3 6 2 7 2 Z" fill="url(#cp1)"/><path d="M11 2 H18 C20 2 21 3 20.5 5 L17 18 C16.5 20.5 15.5 22 13.5 22 H10 C8.5 22 8 21 8.5 19.5 L13 5.5 C13.5 3.5 12.5 2 11 2 Z" fill="url(#cp2)"/></svg>
<svg class="abs" style="left:950px;top:1043px" width="26" height="24" viewBox="0 0 26 24"><path d="M1 4 H10 L12 6.5 H25 V22 H1 Z" fill="#e8a21a"/><rect x="1" y="9" width="24" height="13" fill="#ffc83d"/><rect x="1" y="9" width="24" height="2" fill="#f5b82e"/></svg>
<div class="abs" style="left:959px;top:1071.5px;width:6px;height:3px;background:#8a8a8a;border-radius:2px"></div>
<svg class="abs" style="left:995px;top:1044px" width="23" height="24" viewBox="0 0 23 24"><rect x="1" y="5" width="21" height="18" rx="3" fill="#1f5fa8"/><path d="M7 5 V3 A4.5 4.5 0 0 1 16 3 V5" fill="none" stroke="#1f5fa8" stroke-width="1.6"/><rect x="7" y="9" width="4" height="4" fill="#f25022"/><rect x="12" y="9" width="4" height="4" fill="#7fba00"/><rect x="7" y="14" width="4" height="4" fill="#00a4ef"/><rect x="12" y="14" width="4" height="4" fill="#ffb900"/></svg>
<svg class="abs" style="left:1038px;top:1044px" width="24" height="24" viewBox="-12 -12 24 24"><path d="M0 0 L-9.96 -5.75 A11.5 11.5 0 0 1 9.96 -5.75 Z" fill="#ea4335"/><path d="M0 0 L9.96 -5.75 A11.5 11.5 0 0 1 0 11.5 Z" fill="#fbbc04"/><path d="M0 0 L0 11.5 A11.5 11.5 0 0 1 -9.96 -5.75 Z" fill="#34a853"/><circle r="5.4" fill="#fff"/><circle r="4.3" fill="#1a73e8"/></svg>
<svg class="abs" style="left:1084px;top:1043px" width="20" height="26" viewBox="0 0 20 26"><rect x="1" y="1" width="18" height="24" rx="2" fill="#6d7a8a"/><rect x="3" y="3" width="14" height="5" fill="#b9c6d3"/><rect x="3" y="10" width="3.6" height="3.6" fill="#dfe6ee"/><rect x="3" y="15" width="3.6" height="3.6" fill="#dfe6ee"/><rect x="3" y="20" width="3.6" height="3.6" fill="#dfe6ee"/><rect x="8" y="10" width="3.6" height="3.6" fill="#dfe6ee"/><rect x="8" y="15" width="3.6" height="3.6" fill="#dfe6ee"/><rect x="8" y="20" width="3.6" height="3.6" fill="#dfe6ee"/><rect x="13" y="10" width="3.6" height="3.6" fill="#dfe6ee"/><rect x="13" y="15" width="3.6" height="3.6" fill="#dfe6ee"/><rect x="13" y="20" width="3.6" height="3.6" fill="#dfe6ee"/></svg>
<svg class="abs" style="left:1126px;top:1043px" width="24" height="26" viewBox="0 0 24 26"><path d="M3 12 C3 5 9 2 13 4 C18 2 23 8 21 14 C20 20 15 24 11 23 C6 22 3 18 3 12 Z" fill="#e41f26"/><circle cx="12" cy="9" r="5" fill="#f8d12f"/><path d="M9 9 L12 6 L15 9" stroke="#222" stroke-width="1.2" fill="none"/></svg>
<svg class="abs" style="left:1171px;top:1044px" width="23" height="23" viewBox="0 0 23 23"><rect x="1" y="1" width="21" height="21" rx="2" fill="#222"/><path d="M22 10 V22 H10 Z" fill="#fcd116"/></svg>
<svg class="abs" style="left:1215px;top:1043px" width="26" height="26" viewBox="0 0 26 26"><rect x="2" y="2" width="13" height="13" fill="none" stroke="#d13438" stroke-width="1.8" stroke-dasharray="3 2"/><path d="M8 8 L22 22 M22 8 L8 22" stroke="#4a7fc8" stroke-width="1.8"/><circle cx="7" cy="21" r="3" fill="none" stroke="#4a7fc8" stroke-width="1.6"/><circle cx="22" cy="21" r="3" fill="none" stroke="#4a7fc8" stroke-width="1.6"/></svg>
<div class="abs" style="left:1252px;top:1037px;width:38px;height:38px;background:#f6f6f6;border-radius:5px;box-shadow:0 0 0 1px #e4e4e4"></div>
<svg class="abs" style="left:1259px;top:1044px" width="24" height="24" viewBox="-12 -12 24 24"><path d="M0 0 L-9.96 -5.75 A11.5 11.5 0 0 1 9.96 -5.75 Z" fill="#ea4335"/><path d="M0 0 L9.96 -5.75 A11.5 11.5 0 0 1 0 11.5 Z" fill="#fbbc04"/><path d="M0 0 L0 11.5 A11.5 11.5 0 0 1 -9.96 -5.75 Z" fill="#34a853"/><circle r="5.4" fill="#fff"/><circle r="4.3" fill="#1a73e8"/></svg>
<div class="abs" style="left:1271.6px;top:1039px;width:16px;height:16px;background:#7b1fa2;border-radius:50%;box-shadow:0 0 0 0.6px #5a1580"></div>
<div class="t" style="left:1276.60px;top:1042.85px;font-size:9px;font-weight:normal;color:#fff;transform:scaleX(0.9974);">A</div>
<div class="abs" style="left:1263px;top:1072px;width:16px;height:3px;background:#0a6fd0;border-radius:2px"></div>
<svg class="abs" style="left:1302px;top:1043px" width="26" height="26" viewBox="0 0 26 26"><rect x="9" y="2" width="16" height="22" rx="2" fill="#21a366"/><rect x="9" y="2" width="16" height="7" fill="#33c481"/><rect x="9" y="16" width="16" height="8" fill="#107c41"/><rect x="1" y="6" width="14" height="14" rx="1.5" fill="#107c41"/><path d="M4.5 9 L11.5 17 M11.5 9 L4.5 17" stroke="#fff" stroke-width="2"/></svg>
<div class="abs" style="left:1312px;top:1071.5px;width:6px;height:3px;background:#8a8a8a;border-radius:2px"></div>
<svg class="abs" style="left:1347px;top:1044px" width="24" height="24" viewBox="-12 -12 24 24"><path d="M0 0 L-9.96 -5.75 A11.5 11.5 0 0 1 9.96 -5.75 Z" fill="#ea4335"/><path d="M0 0 L9.96 -5.75 A11.5 11.5 0 0 1 0 11.5 Z" fill="#fbbc04"/><path d="M0 0 L0 11.5 A11.5 11.5 0 0 1 -9.96 -5.75 Z" fill="#34a853"/><circle r="5.4" fill="#fff"/><circle r="4.3" fill="#1a73e8"/></svg>
<svg class="abs" style="left:1358px;top:1038px" width="20" height="14" viewBox="0 0 20 14"><ellipse cx="10" cy="7" rx="9" ry="6" fill="#5a5a5a"/><path d="M3 9 Q10 3 17 9" stroke="#aaa" stroke-width="1" fill="none"/></svg>
<div class="abs" style="left:1356px;top:1071.5px;width:6px;height:3px;background:#8a8a8a;border-radius:2px"></div>
<svg class="abs" style="left:1675px;top:1050px" width="14" height="10" viewBox="0 0 14 10"><path d="M2 8 L7 3 L12 8" fill="none" stroke="#222" stroke-width="1.4"/></svg>
<svg class="abs" style="left:1702px;top:1044px" width="24" height="24" viewBox="0 0 24 24"><path d="M5 11 A7 7 0 0 1 18 7 M19 13 A7 7 0 0 1 6 17" fill="none" stroke="#333" stroke-width="1.5"/><path d="M18 3 V8 H13" fill="none" stroke="#333" stroke-width="1.5"/><path d="M6 21 V16 H11" fill="none" stroke="#333" stroke-width="1.5"/><circle cx="19" cy="18" r="4" fill="#f7941d"/></svg>
<div class="t" style="left:1739.50px;top:1042.80px;font-size:12px;font-weight:normal;color:#1a1a1a;transform:scaleX(0.9610);">ENG</div>
<div class="t" style="left:1746.00px;top:1058.80px;font-size:12px;font-weight:normal;color:#1a1a1a;">IN</div>
<svg class="abs" style="left:1779px;top:1045px" width="22" height="22" viewBox="0 0 22 22"><rect x="1.5" y="3" width="15" height="11" fill="none" stroke="#222" stroke-width="1.3"/><path d="M6 18 H12 M9 14 V18" stroke="#222" stroke-width="1.3"/><rect x="13" y="1" width="6" height="9" fill="#eee" stroke="#222" stroke-width="1.2"/></svg>
<svg class="abs" style="left:1803px;top:1046px" width="22" height="20" viewBox="0 0 22 20"><path d="M2 7 H5 L10 3 V17 L5 13 H2 Z" fill="none" stroke="#222" stroke-width="1.3" stroke-linejoin="round"/><path d="M12.5 7.5 Q14 10 12.5 12.5 M15 5.5 Q17.5 10 15 14.5 M17.5 3.5 Q21 10 17.5 16.5" fill="none" stroke="#222" stroke-width="1.2"/></svg>
<div class="t" style="left:1873.00px;top:1042.80px;font-size:12px;font-weight:normal;color:#1a1a1a;transform:scaleX(0.9324);">17:17</div>
<div class="t" style="left:1840.00px;top:1058.80px;font-size:12px;font-weight:normal;color:#1a1a1a;transform:scaleX(0.9936);">17-01-2026</div>
</body></html>
